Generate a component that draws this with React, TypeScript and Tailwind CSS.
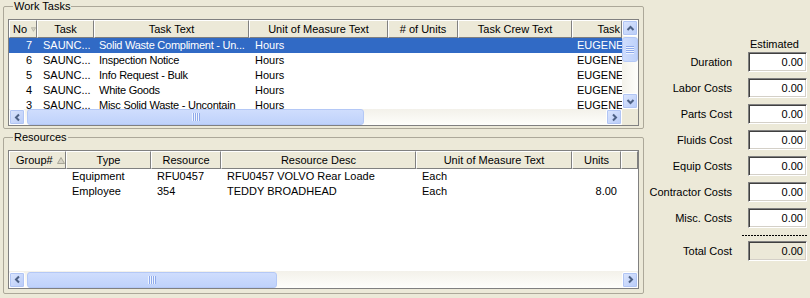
import React from 'react';

type Dir = 'up' | 'down' | 'left' | 'right';

const chevrons: Record<Dir, string> = {
  up: 'M1.5 6 L4.5 3 L7.5 6',
  down: 'M1.5 3 L4.5 6 L7.5 3',
  left: 'M6 1.5 L3 4.5 L6 7.5',
  right: 'M3 1.5 L6 4.5 L3 7.5',
};

const ScrollBtn: React.FC<{ dir: Dir }> = ({ dir }) => (
  <div className="w-[16px] h-[16px] shrink-0 rounded-[2px] border border-white bg-gradient-to-br from-[#DCE6FD] to-[#B8CBF8] shadow-[inset_0_0_0_1px_#B1C5F4] flex items-center justify-center">
    <svg width="9" height="9" viewBox="0 0 9 9">
      <path d={chevrons[dir]} fill="none" stroke="#4D6185" strokeWidth="2" />
    </svg>
  </div>
);

const Grip: React.FC<{ vertical?: boolean }> = ({ vertical }) =>
  vertical ? (
    <svg width="8" height="8" viewBox="0 0 8 8">
      <path d="M0 0.5H8M0 2.5H8M0 4.5H8M0 6.5H8" stroke="#8FAAEC" />
      <path d="M0 1.5H8M0 3.5H8M0 5.5H8M0 7.5H8" stroke="#EEF4FE" />
    </svg>
  ) : (
    <svg width="8" height="8" viewBox="0 0 8 8">
      <path d="M0.5 0V8M2.5 0V8M4.5 0V8M6.5 0V8" stroke="#EEF4FE" />
      <path d="M1.5 0V8M3.5 0V8M5.5 0V8M7.5 0V8" stroke="#8FAAEC" />
    </svg>
  );

const HScroll: React.FC<{ thumb: string; className: string }> = ({ thumb, className }) => (
  <div className={`${className} flex items-center bg-gradient-to-b from-[#F3F1EA] to-[#FEFEFB]`}>
    <ScrollBtn dir="left" />
    <div className={`${thumb} h-[16px] ml-[2px] rounded-[3px] border border-[#B4C8F6] bg-gradient-to-b from-[#CFDDFD] to-[#BFD2FB] flex items-center justify-center`}>
      <Grip />
    </div>
    <div className="flex-1" />
    <ScrollBtn dir="right" />
  </div>
);

const VScroll: React.FC = () => (
  <div className="w-[16px] h-full flex flex-col bg-gradient-to-r from-[#F3F1EA] to-[#FEFEFB]">
    <ScrollBtn dir="up" />
    <div className="w-[16px] h-[25px] mt-[1px] rounded-[3px] border border-[#B4C8F6] bg-gradient-to-r from-[#CFDDFD] to-[#BFD2FB] flex items-center justify-center">
      <Grip vertical />
    </div>
    <div className="flex-1" />
    <ScrollBtn dir="down" />
  </div>
);

const SortArrow: React.FC<{ up?: boolean }> = ({ up }) => (
  <svg width="8" height="7" viewBox="0 0 8 7" className="ml-[4px]">
    <path d={up ? 'M4 0.5 L7.5 6.5 L0.5 6.5 Z' : 'M0.5 0.5 L7.5 0.5 L4 6.5 Z'} fill="#D6D3C6" stroke="#A7A597" />
  </svg>
);

interface Col {
  w: string;
  label: string;
  head: string;
  cell: string;
  sort?: 'up' | 'down';
}

const headCls =
  'h-[18px] shrink-0 flex items-center overflow-hidden whitespace-nowrap bg-[#ECE9D8] border-t border-l border-t-white border-l-white border-r border-b border-r-[#808080] border-b-[#808080]';

const GridHeader: React.FC<{ cols: Col[]; filler?: string }> = ({ cols, filler }) => (
  <div className="flex h-[18px]">
    {cols.map((c, i) => (
      <div key={i} className={`${headCls} ${c.w} ${c.head}`}>
        {c.label}
        {c.sort && <SortArrow up={c.sort === 'up'} />}
      </div>
    ))}
    {filler && <div className={`${headCls} ${filler}`} />}
  </div>
);

const GridRow: React.FC<{ cols: Col[]; values: string[]; selected?: boolean }> = ({ cols, values, selected }) => (
  <div className={`flex h-[15px] shrink-0 ${selected ? 'bg-[#316AC5] text-white' : ''}`}>
    {cols.map((c, i) => (
      <div key={i} className={`${c.w} shrink-0 flex items-center overflow-hidden whitespace-nowrap ${c.cell}`}>
        {values[i]}
      </div>
    ))}
  </div>
);

const taskCols: Col[] = [
  { w: 'w-[28px]', label: 'No', head: 'justify-start pl-[3px]', cell: 'justify-end pr-[5px]', sort: 'down' },
  { w: 'w-[57px]', label: 'Task', head: 'justify-center', cell: 'pl-[6px]' },
  { w: 'w-[155px]', label: 'Task Text', head: 'justify-center', cell: 'pl-[5px] tracking-[-0.25px]' },
  { w: 'w-[139px]', label: 'Unit of Measure Text', head: 'justify-center', cell: 'pl-[6px]' },
  { w: 'w-[70px]', label: '# of Units', head: 'justify-center', cell: 'justify-end pr-[5px]' },
  { w: 'w-[114px]', label: 'Task Crew Text', head: 'justify-center', cell: 'pl-[6px]' },
  { w: 'w-[50px]', label: 'Task', head: 'justify-end pr-[1px]', cell: 'pl-[5px]' },
];

const tasks = [
  ['7', 'SAUNC...', 'Solid Waste Compliment - Un...', 'Hours', '', '', 'EUGENE'],
  ['6', 'SAUNC...', 'Inspection Notice', 'Hours', '', '', 'EUGENE'],
  ['5', 'SAUNC...', 'Info Request - Bulk', 'Hours', '', '', 'EUGENE'],
  ['4', 'SAUNC...', 'White Goods', 'Hours', '', '', 'EUGENE'],
  ['3', 'SAUNC...', 'Misc Solid Waste - Uncontain', 'Hours', '', '', 'EUGENE'],
];

const resCols: Col[] = [
  { w: 'w-[57px]', label: 'Group#', head: 'justify-start pl-[6px]', cell: 'pl-[6px]', sort: 'up' },
  { w: 'w-[85px]', label: 'Type', head: 'justify-center', cell: 'pl-[6px]' },
  { w: 'w-[70px]', label: 'Resource', head: 'justify-center', cell: 'pl-[6px]' },
  { w: 'w-[195px]', label: 'Resource Desc', head: 'justify-center', cell: 'pl-[6px]' },
  { w: 'w-[156px]', label: 'Unit of Measure Text', head: 'justify-center', cell: 'pl-[6px]' },
  { w: 'w-[49px]', label: 'Units', head: 'justify-center', cell: 'justify-end pr-[4px]' },
];

const resources = [
  ['', 'Equipment', 'RFU0457', 'RFU0457 VOLVO Rear Loade', 'Each', ''],
  ['', 'Employee', '354', 'TEDDY BROADHEAD', 'Each', '8.00'],
];

const costs = ['Duration', 'Labor Costs', 'Parts Cost', 'Fluids Cost', 'Equip Costs', 'Contractor Costs', 'Misc. Costs'];

const boxCls =
  'w-[59px] h-[20px] ml-[16px] border border-t-[#808080] border-l-[#808080] border-r-white border-b-white shadow-[inset_1px_1px_0_#404040,inset_-1px_-1px_0_#D4D0C8] flex items-center justify-end pr-[3px]';

export default function App() {
  return (
    <div className="w-[810px] h-[298px] overflow-hidden bg-[#ECE9D8] flex font-['Liberation_Sans',Arial,sans-serif] text-[11px] leading-[13px] text-black">
      {/* Left: grids */}
      <div className="w-[644px] shrink-0 pl-[3px] flex flex-col gap-[2px]">
        <fieldset className="w-[641px] h-[129px] m-0 min-w-0 border border-[#ACA899] rounded-[2px] px-[4px] pt-[6px] pb-0">
          <legend className="ml-[5px] px-[1px] leading-[13px]">Work Tasks</legend>
          <div className="w-[631px] border border-[#808080] bg-white flex flex-col">
            <div className="flex h-[89px]">
              <div className="w-[613px] flex flex-col overflow-hidden">
                <GridHeader cols={taskCols} />
                <div className="flex-1 flex flex-col overflow-hidden">
                  {tasks.map((t, i) => (
                    <GridRow key={i} cols={taskCols} values={t} selected={i === 0} />
                  ))}
                </div>
              </div>
              <VScroll />
            </div>
            <div className="flex h-[16px]">
              <HScroll className="w-[613px] h-[16px]" thumb="w-[337px]" />
              <div className="w-[16px] bg-[#ECE9D8]" />
            </div>
          </div>
        </fieldset>

        <fieldset className="w-[641px] h-[163px] m-0 min-w-0 border border-[#ACA899] rounded-[2px] px-[4px] pt-[6px] pb-0">
          <legend className="ml-[5px] px-[1px] leading-[13px]">Resources</legend>
          <div className="w-[631px] border border-[#808080] bg-white flex flex-col">
            <GridHeader cols={resCols} filler="w-[17px]" />
            <div className="h-[102px] flex flex-col">
              {resources.map((r, i) => (
                <GridRow key={i} cols={resCols} values={r} />
              ))}
            </div>
            <HScroll className="w-[629px] h-[17px]" thumb="w-[250px]" />
          </div>
        </fieldset>
      </div>

      {/* Right: cost summary */}
      <div className="flex-1 flex flex-col pt-[38px]">
        <div className="flex">
          <div className="w-[104px]" />
          <div className="w-[59px] pl-[2px]">Estimated</div>
        </div>
        <div className="mt-[1px] flex flex-col gap-[6px]">
          {costs.map((c) => (
            <div key={c} className="flex items-center h-[20px]">
              <span className="w-[88px] text-right whitespace-nowrap">{c}</span>
              <div className={`${boxCls} bg-white`}>0.00</div>
            </div>
          ))}
        </div>
        <div className="mt-[7px] ml-[98px] w-[65px] h-px bg-[repeating-linear-gradient(90deg,#000_0_2px,transparent_2px_3px)]" />
        <div className="mt-[5px] flex items-center h-[20px]">
          <span className="w-[88px] text-right">Total Cost</span>
          <div className={`${boxCls} bg-[#ECE9D8]`}>0.00</div>
        </div>
      </div>
    </div>
  );
}
